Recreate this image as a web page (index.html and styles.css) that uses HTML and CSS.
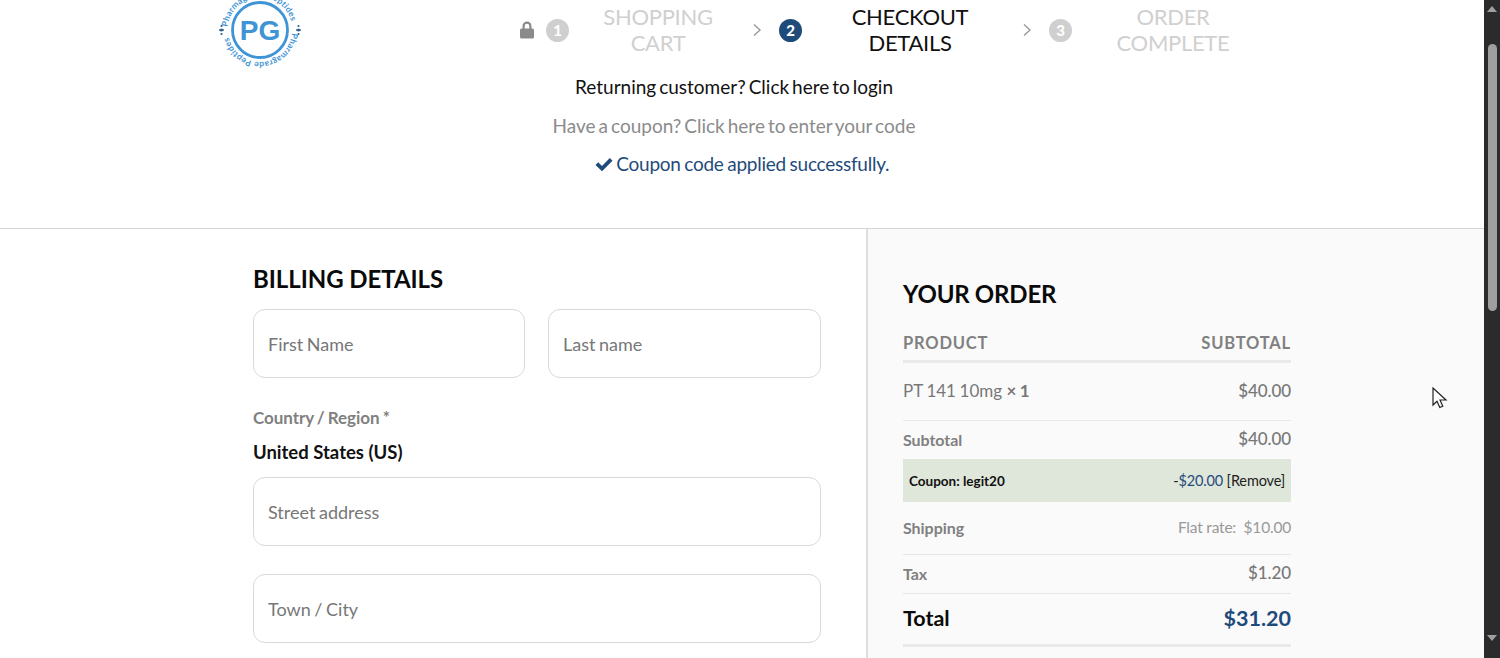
FILE: index.html
```html
<!DOCTYPE html>
<html lang="en">
<head>
<meta charset="utf-8">
<title>Checkout</title>
<link rel="stylesheet" href="styles.css">
</head>
<body>
<div class="window">
  <main class="page">
    <header class="top">
      <div class="brand-row">
        <svg class="logo" width="90" height="90" viewBox="0 0 90 90" aria-label="Pharmagrade Peptides">
          <defs>
            <path id="logo-arc-top" d="M12.500 45A32.500 32.500 0 0 1 77.500 45"/>
            <path id="logo-arc-bottom" d="M77 45A32 32 0 0 1 13 45"/>
          </defs>
          <circle cx="45" cy="45" r="27.500" class="logo-ring"/>
          <text class="logo-ring-text"><textPath href="#logo-arc-bottom" startOffset="3">Pharmagrade Peptides</textPath></text>
          <text class="logo-ring-text"><textPath href="#logo-arc-top" startOffset="3">Pharmagrade Peptides</textPath></text>
          <text x="45" y="54.500" text-anchor="middle" class="logo-pg">PG</text>
          <g class="logo-dots">
            <rect x="4" y="44.300" width="5" height="1.400"/><circle cx="6.500" cy="41" r="1.100"/><circle cx="6.500" cy="45" r="1.500"/><circle cx="6.500" cy="49" r="1.100"/>
            <rect x="81" y="44.300" width="5" height="1.400"/><circle cx="83.500" cy="41" r="1.100"/><circle cx="83.500" cy="45" r="1.500"/><circle cx="83.500" cy="49" r="1.100"/>
          </g>
        </svg>
        <nav class="steps">
          <svg class="lock" width="16" height="18" viewBox="0 0 16 18"><path d="M3.500 8V5a4.500 4.500 0 0 1 9 0V8h-2.200V5a2.300 2.300 0 0 0-4.600 0V8z" fill="#8a8a8a"/><rect x="1" y="7.500" width="14" height="10" rx="1.500" fill="#8a8a8a"/></svg>
          <span class="num">1</span>
          <span class="step-text step-a">Shopping<br>Cart</span>
          <svg class="chev" width="10" height="14" viewBox="0 0 10 14"><path d="M2 1.500 8 7l-6 5.500" fill="none" stroke="#9a9a9a" stroke-width="1.400"/></svg>
          <span class="num num-on">2</span>
          <span class="step-text step-b step-on">Checkout<br>Details</span>
          <svg class="chev" width="10" height="14" viewBox="0 0 10 14"><path d="M2 1.500 8 7l-6 5.500" fill="none" stroke="#9a9a9a" stroke-width="1.400"/></svg>
          <span class="num">3</span>
          <span class="step-text step-c">Order<br>Complete</span>
        </nav>
      </div>
      <div class="notices">
        <p class="notice notice-login">Returning customer? Click here to login</p>
        <p class="notice notice-coupon">Have a coupon? Click here to enter your code</p>
        <p class="notice notice-ok"><svg class="tick" width="18" height="15" viewBox="0 0 18 15"><path d="M0.500 8 3.200 5.200l3.800 3.800L14.800 1l2.700 2.800L7 14.200z" fill="#1f4b7a"/></svg> Coupon code applied successfully.</p>
      </div>
    </header>
    <div class="checkout">
      <section class="billing">
        <h2 class="billing-title">BILLING DETAILS</h2>
        <div class="name-row">
          <input class="field field-first" placeholder="First Name">
          <input class="field field-half" placeholder="Last name">
        </div>
        <div class="country-label">Country / Region *</div>
        <div class="country-value">United States (US)</div>
        <input class="field field-wide" placeholder="Street address">
        <input class="field field-wide field-town" placeholder="Town / City">
      </section>
      <aside class="order">
        <h2 class="order-title">YOUR ORDER</h2>
        <div class="order-table">
          <div class="row row-head"><span>PRODUCT</span><span>SUBTOTAL</span></div>
          <div class="row row-item"><span>PT 141 10mg&nbsp; <b class="qty">× 1</b></span><span class="amount">$40.00</span></div>
          <div class="row row-sub"><span class="label">Subtotal</span><span class="amount amount-up">$40.00</span></div>
          <div class="row row-coupon"><span class="coupon-name">Coupon: legit20</span><span class="coupon-val">-<span class="blue">$20.00</span> [Remove]</span></div>
          <div class="row row-ship"><span class="label">Shipping</span><span class="ship-val">Flat rate:&nbsp; $10.00</span></div>
          <div class="row row-tax"><span class="label">Tax</span><span class="amount amount-up">$1.20</span></div>
          <div class="row row-total"><span class="total-label">Total</span><span class="total-val">$31.20</span></div>
        </div>
      </aside>
    </div>
    <svg class="cursor" width="16" height="24" viewBox="0 0 16 24"><path d="M1 1v17l4-3.800 2.800 6.300 3-1.300-2.800-6.200H14z" fill="#fff" stroke="#222" stroke-width="1.200"/></svg>
  </main>
  <div class="scrollbar">
    <span class="arrow arrow-up"></span>
    <span class="thumb"></span>
    <span class="arrow arrow-down"></span>
  </div>
</div>
</body>
</html>
```
FILE: styles.css
```css
* { box-sizing: border-box; }
html, body { margin: 0; height: 100%; overflow: hidden; background: #fff; }
body { font-family: Lato, "Open Sans", sans-serif; color: #777; }
.window { display: flex; height: 658px; width: 1500px; overflow: hidden; }
.page { position: relative; width: 1484px; flex: none; height: 658px; overflow: hidden; }

.top { height: 229px; border-bottom: 1px solid #d5d5d5; }
.brand-row { display: flex; align-items: flex-start; height: 68px; padding-left: 215px; }
.logo { flex: none; margin-top: -15px; }
.logo-ring { fill: none; stroke: #3f94d6; stroke-width: 2.800; }
.logo-ring-text { font-size: 8.500px; font-weight: 700; fill: #3f94d6; letter-spacing: 0.250px; }
.logo-pg { font-size: 28px; font-weight: 700; fill: #3f94d6; font-family: "Liberation Sans", sans-serif; }
.logo-dots { fill: #2d5f8e; }

.steps { display: flex; align-items: center; margin-left: 214px; padding-top: 4px; height: 56px; }
.lock { flex: none; margin-right: 11px; }
.num { flex: none; width: 23px; height: 23px; border-radius: 50%; background: #cfcfcf; color: #fff; font-size: 15px; font-weight: 900; display: flex; align-items: center; justify-content: center; }
.num-on { background: #1f4b7a; }
.step-text { flex: none; text-align: center; text-transform: uppercase; font-size: 22px; line-height: 26px; letter-spacing: -0.300px; color: #d0d0d0; }
.step-on { color: #111; }
.step-a { width: 178px; }
.step-b { width: 216px; }
.step-c { width: 202px; }
.chev { flex: none; margin: 0 17px 0 5px; }
.step-b + .chev { margin: 0 17px 0 4px; }

.notices { padding: 0 16px 0 0; text-align: center; }
.notice { margin: 0; font-size: 19px; line-height: 38.500px; word-spacing: -1.900px; }
.notice-login { color: #111; }
.notice-coupon { color: #8b8b8b; }
.notice-ok { color: #1f4b7a; padding-left: 16px; letter-spacing: -0.250px; word-spacing: -1px; }
.tick { vertical-align: -1px; }

.checkout { display: flex; height: 429px; }
.billing { width: 868px; flex: none; padding: 36px 45px 0 253px; border-right: 2px solid #dedede; word-spacing: -1px; }
.billing-title { margin: 0 0 17px; color: #0a0a0a; font-size: 24px; line-height: 27px; font-weight: 700; letter-spacing: -0.050px; word-spacing: 0; }
.name-row { display: flex; gap: 23px; }
.field { display: block; height: 69px; border: 1px solid #d9d9d9; border-radius: 12px; background: #fff; padding: 0 14px; font: 400 18px Lato, sans-serif; word-spacing: -1px; color: #777; outline: none; }
.field::placeholder { color: #777; opacity: 1; }
.field-first { flex: none; width: 272px; }
.field-half { flex: 1; min-width: 0; }
.field-wide { width: 100%; }
.field-town { margin-top: 28px; }
.country-label { margin-top: 28px; font-size: 17px; line-height: 24px; font-weight: 700; color: #808080; letter-spacing: -0.050px; }
.country-value { margin: 10px 0 13px; font-size: 18.500px; line-height: 24px; font-weight: 700; color: #111; word-spacing: 0; }

.order { flex: 1; background: #fafafa; padding: 51px 0 0 35px; }
.order-title { margin: 0; color: #0a0a0a; font-size: 24px; line-height: 27px; font-weight: 700; letter-spacing: -0.150px; word-spacing: -0.500px; }
.order-table { width: 388px; margin-top: 17px; }
.row { display: flex; justify-content: space-between; align-items: center; font-size: 17px; padding-bottom: 2px; }
.row-head { height: 39px; padding: 2px 0 0; border-bottom: 3px solid #e9e9e9; font-size: 16.500px; font-weight: 700; letter-spacing: 0.800px; color: #808080; }
.row-item { height: 58px; border-bottom: 1px solid #e9e9e9; color: #777; word-spacing: -0.700px; }
.qty { font-weight: 700; margin-left: -3px; }
.amount { font-weight: 500; color: #777; letter-spacing: -0.100px; }
.amount-up { margin-bottom: 2px; }
.row-sub { height: 38px; padding-bottom: 1px; }
.label { font-size: 16px; font-weight: 700; color: #808080; letter-spacing: -0.050px; }
.row-coupon { height: 43px; background: #dfe6da; padding: 0 6px; }
.coupon-name { font-size: 13.500px; font-weight: 700; color: #111; }
.coupon-val { font-size: 14.500px; color: #222; letter-spacing: -0.150px; }
.blue { color: #1f4b7a; }
.row-ship { height: 53px; border-bottom: 1px solid #e6e6e6; }
.ship-val { font-size: 15.500px; color: #999; letter-spacing: -0.200px; }
.row-tax { height: 39px; border-bottom: 1px solid #e6e6e6; }
.row-total { height: 53px; border-bottom: 3px solid #e9e9e9; padding-bottom: 2px; }
.total-label { font-size: 21.500px; font-weight: 700; color: #0a0a0a; }
.total-val { font-size: 21.500px; font-weight: 700; color: #1f4b7a; }

.cursor { position: absolute; left: 1432px; top: 387px; }

.scrollbar { flex: none; width: 16px; height: 658px; background: #2b2b2b; display: flex; flex-direction: column; align-items: center; padding: 6px 0; }
.arrow { width: 0; height: 0; border-left: 5px solid transparent; border-right: 5px solid transparent; }
.arrow-up { border-bottom: 6px solid #9f9f9f; }
.arrow-down { border-top: 6px solid #9f9f9f; margin-top: 324px; }
.thumb { width: 9px; height: 267px; margin: 32px 0 0 1px; border-radius: 5px; background: #9f9f9f; }
```
